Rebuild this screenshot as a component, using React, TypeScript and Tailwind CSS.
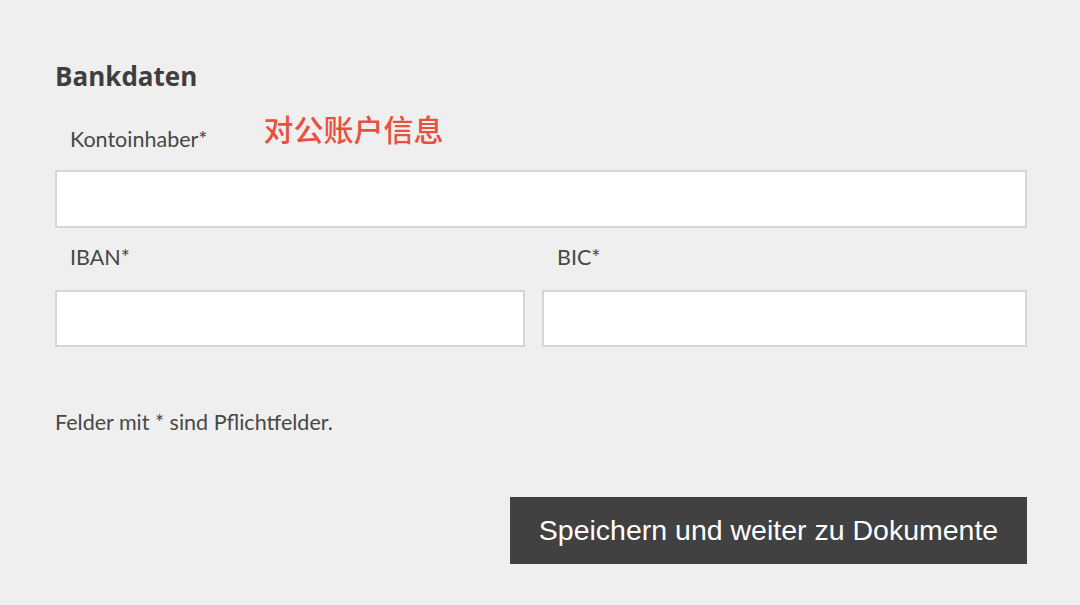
export default function App() {
  const label = "text-[21.5px] leading-[26px] text-[#474747]"
  const input = "block w-full border-2 border-[#d6d6d6] bg-white outline-none"

  return (
    <div className="min-h-[605px] bg-[#efefef] px-[55px] pt-[61px] font-['Lato',sans-serif]">
      <div className="w-[972px]">
        {/* title */}
        <h2 className="font-['Open_Sans',sans-serif] text-[26px] leading-[30px] font-bold text-[#3e3e3e]">Bankdaten</h2>

        <div className="mt-[19px] flex items-start">
          <label className={`${label} mt-[16px] pl-[15px]`}>Kontoinhaber*</label>
          <span className="ml-[56px] font-['Noto_Sans_CJK_SC',sans-serif] text-[30px] leading-[36px] font-medium text-[#e8513f]">
            对公账户信息
          </span>
        </div>
        <input className={`${input} mt-[18px] h-[58px]`} />

        <div className="mt-[16px] flex gap-[17px]">
          <div className="w-[470px]">
            <label className={`${label} block pl-[15px]`}>IBAN*</label>
            <input className={`${input} mt-[20px] h-[57px]`} />
          </div>
          <div className="flex-1">
            <label className={`${label} block pl-[15px]`}>BIC*</label>
            <input className={`${input} mt-[20px] h-[57px]`} />
          </div>
        </div>

        <p className={`${label} mt-[62px]`}>Felder mit * sind Pflichtfelder.</p>

        <div className="mt-[62px] flex justify-end">
          <button className="h-[67px] w-[517px] bg-[#414141] font-['Liberation_Sans',Arial,sans-serif] text-[28.5px] text-white">
            Speichern und weiter zu Dokumente
          </button>
        </div>
      </div>
    </div>
  )
}
